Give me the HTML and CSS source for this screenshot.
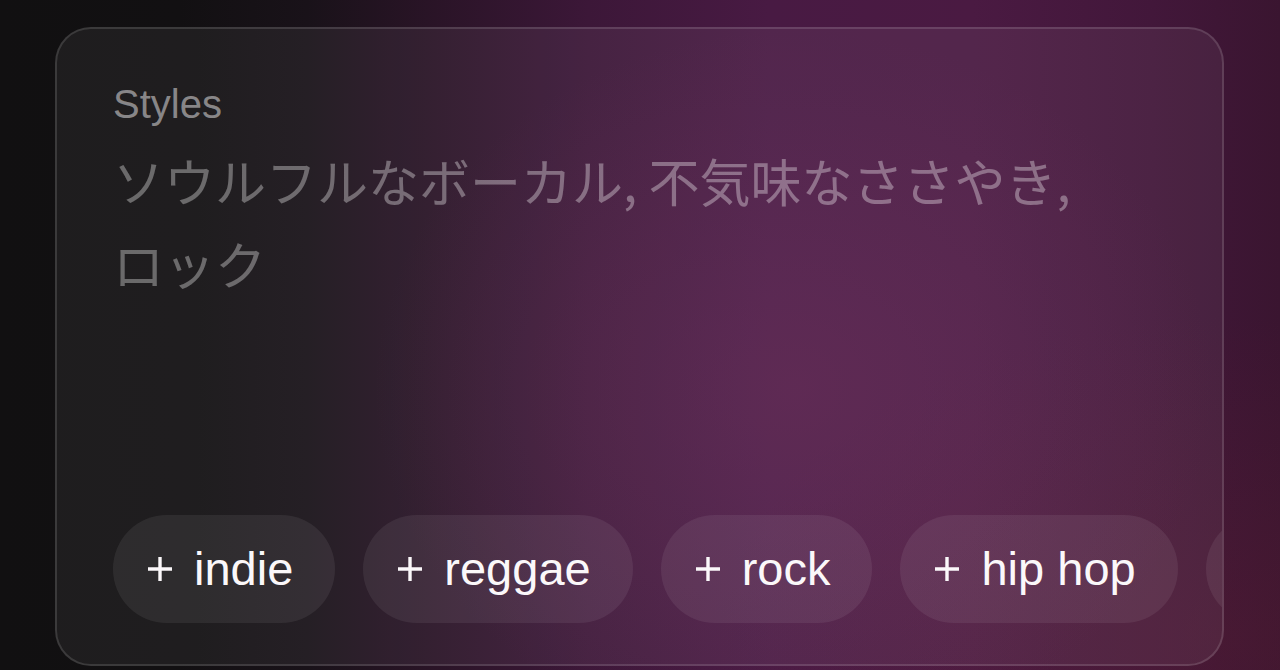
FILE: index.html
```html
<!DOCTYPE html>
<html lang="ja">
<head>
<meta charset="utf-8">
<title>Styles</title>
<link rel="stylesheet" href="styles.css">
</head>
<body>
<div class="page">
  <section class="card">
    <div class="label">Styles</div>
    <div class="prompt">ソウルフルなボーカル, 不気味なささやき, ロック</div>
    <div class="chips">
      <button class="chip"><svg class="plus" viewBox="0 0 26 26"><path d="M13 1V25M1 13H25"/></svg><span>indie</span></button>
      <button class="chip"><svg class="plus" viewBox="0 0 26 26"><path d="M13 1V25M1 13H25"/></svg><span>reggae</span></button>
      <button class="chip"><svg class="plus" viewBox="0 0 26 26"><path d="M13 1V25M1 13H25"/></svg><span>rock</span></button>
      <button class="chip"><svg class="plus" viewBox="0 0 26 26"><path d="M13 1V25M1 13H25"/></svg><span>hip hop</span></button>
      <button class="chip chip-more" aria-label="more"></button>
    </div>
  </section>
</div>
</body>
</html>
```

FILE: styles.css
```css
* { box-sizing: border-box; }
html, body {
  margin: 0;
  padding: 0;
  width: 1280px;
  height: 670px;
  overflow: hidden;
}
body {
  font-family: "Liberation Sans", Arial, "Noto Sans CJK JP", sans-serif;
  background:
    radial-gradient(ellipse 420px 360px at 62% 58%, rgba(110, 38, 90, 0.35), rgba(110, 38, 90, 0) 100%),
    radial-gradient(ellipse 500px 320px at 95% 95%, rgba(90, 30, 50, 0.35), rgba(90, 30, 50, 0) 100%),
    linear-gradient(90deg, #111011 0%, #121012 14%, #191219 24%, #2a1427 34%, #3c1738 46%, #481a43 60%, #4a1a42 76%, #42173a 90%, #3a1530 100%);
}
.page {
  padding: 27px 56px 0 55px;
}
.card {
  height: 639px;
  border: 2px solid rgba(255, 255, 255, 0.13);
  border-radius: 36px;
  background: rgba(255, 255, 255, 0.055);
  padding: 51px 0 41px 56px;
  display: flex;
  flex-direction: column;
  overflow: hidden;
}
.label {
  font-size: 40px;
  line-height: 48px;
  color: rgba(255, 255, 255, 0.48);
}
.prompt {
  margin-top: 11px;
  padding-right: 110px;
  font-family: "Noto Sans CJK JP", "Liberation Sans", sans-serif;
  font-size: 51px;
  line-height: 83px;
  color: rgba(255, 255, 255, 0.34);
}
.chips {
  margin-top: auto;
  display: flex;
  gap: 28px;
  flex-wrap: nowrap;
}
.chip {
  flex: none;
  display: flex;
  align-items: center;
  gap: 21px;
  height: 108px;
  padding: 0 42px 0 34px;
  border: none;
  border-radius: 54px;
  background: rgba(255, 255, 255, 0.07);
  color: #fbf8fa;
  font-family: "Liberation Sans", Arial, sans-serif;
  font-size: 47px;
  line-height: 1;
  cursor: pointer;
}
.chip-more {
  width: 200px;
}
.chip span {
  position: relative;
  top: -1px;
}
.plus {
  width: 26px;
  height: 26px;
  flex: none;
}
.plus path {
  stroke: #fbf8fa;
  stroke-width: 3.4;
  fill: none;
}
```
